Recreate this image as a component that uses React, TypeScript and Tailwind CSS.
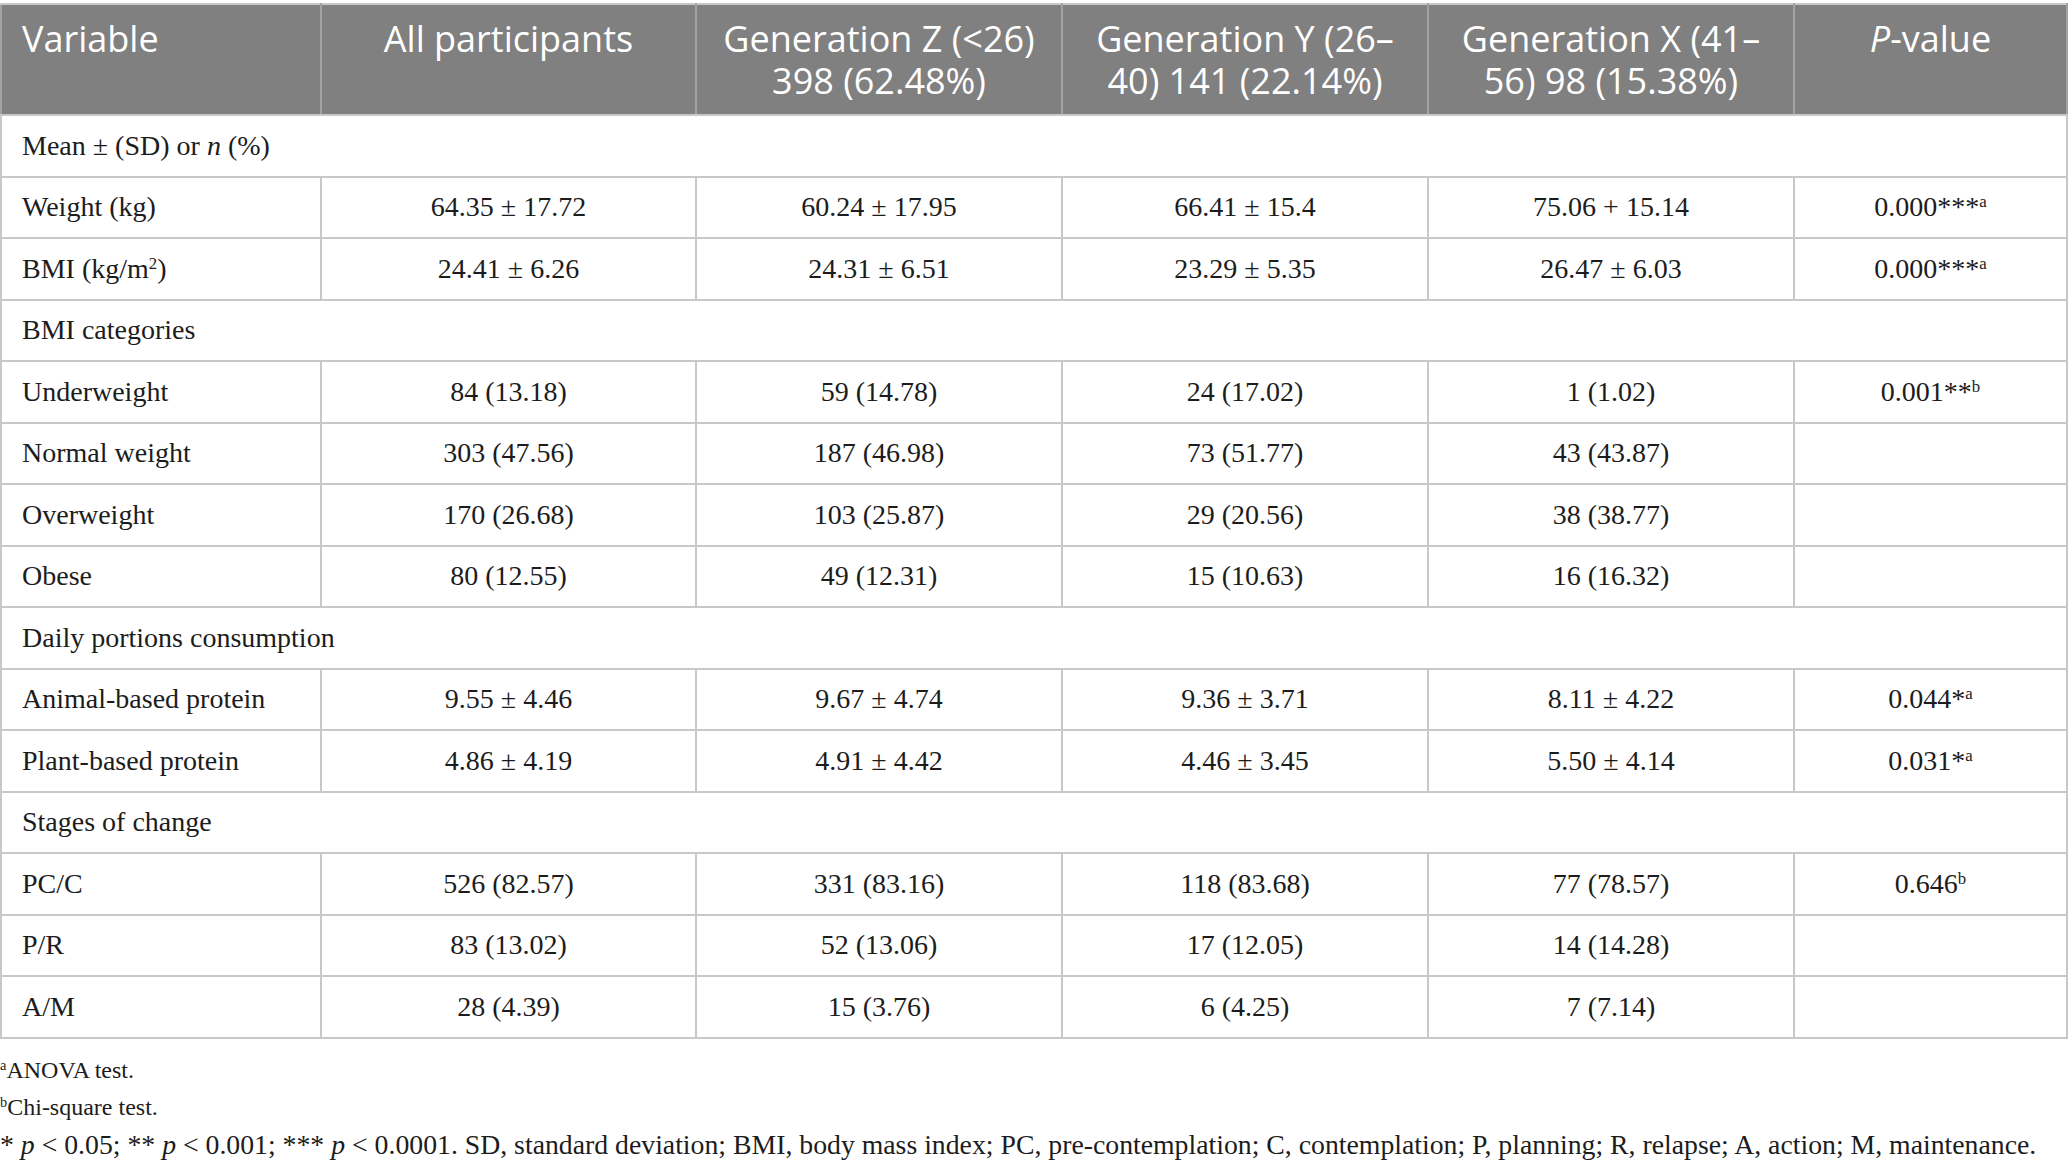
import type { ReactNode } from 'react'

type Row =
  | { kind: 'section'; label: ReactNode }
  | { kind: 'data'; label: ReactNode; cells: string[]; p?: ReactNode }

const Sup = ({ children }: { children: ReactNode }) => (
  <span className="relative -top-[0.55em] text-[0.6em] leading-none">
    {children}
  </span>
)

const pv = (value: string, stars: string, note: string) => (
  <>
    {value}
    {stars}
    <Sup>{note}</Sup>
  </>
)

const ROWS: Row[] = [
  {
    kind: 'section',
    label: (
      <>
        Mean ± (SD) or <i>n</i> (%)
      </>
    ),
  },
  {
    kind: 'data',
    label: 'Weight (kg)',
    cells: ['64.35 ± 17.72', '60.24 ± 17.95', '66.41 ± 15.4', '75.06 + 15.14'],
    p: pv('0.000', '***', 'a'),
  },
  {
    kind: 'data',
    label: (
      <>
        BMI (kg/m<Sup>2</Sup>)
      </>
    ),
    cells: ['24.41 ± 6.26', '24.31 ± 6.51', '23.29 ± 5.35', '26.47 ± 6.03'],
    p: pv('0.000', '***', 'a'),
  },
  { kind: 'section', label: 'BMI categories' },
  {
    kind: 'data',
    label: 'Underweight',
    cells: ['84 (13.18)', '59 (14.78)', '24 (17.02)', '1 (1.02)'],
    p: pv('0.001', '**', 'b'),
  },
  {
    kind: 'data',
    label: 'Normal weight',
    cells: ['303 (47.56)', '187 (46.98)', '73 (51.77)', '43 (43.87)'],
  },
  {
    kind: 'data',
    label: 'Overweight',
    cells: ['170 (26.68)', '103 (25.87)', '29 (20.56)', '38 (38.77)'],
  },
  {
    kind: 'data',
    label: 'Obese',
    cells: ['80 (12.55)', '49 (12.31)', '15 (10.63)', '16 (16.32)'],
  },
  { kind: 'section', label: 'Daily portions consumption' },
  {
    kind: 'data',
    label: 'Animal-based protein',
    cells: ['9.55 ± 4.46', '9.67 ± 4.74', '9.36 ± 3.71', '8.11 ± 4.22'],
    p: pv('0.044', '*', 'a'),
  },
  {
    kind: 'data',
    label: 'Plant-based protein',
    cells: ['4.86 ± 4.19', '4.91 ± 4.42', '4.46 ± 3.45', '5.50 ± 4.14'],
    p: pv('0.031', '*', 'a'),
  },
  { kind: 'section', label: 'Stages of change' },
  {
    kind: 'data',
    label: 'PC/C',
    cells: ['526 (82.57)', '331 (83.16)', '118 (83.68)', '77 (78.57)'],
    p: pv('0.646', '', 'b'),
  },
  {
    kind: 'data',
    label: 'P/R',
    cells: ['83 (13.02)', '52 (13.06)', '17 (12.05)', '14 (14.28)'],
  },
  {
    kind: 'data',
    label: 'A/M',
    cells: ['28 (4.39)', '15 (3.76)', '6 (4.25)', '7 (7.14)'],
  },
]

const th =
  'border-2 border-x-[#a3a3a3] border-t-[#c8c8c8] border-b-[#c8c8c8] px-5 pt-[13px] align-top font-normal'
const td = 'border-2 border-[#c8c8c8] px-5 text-center'

const App = () => {
  return (
    <div className="min-h-screen bg-white pt-[3px] text-[#1c1c1c]">
      <table className="w-full table-fixed border-collapse font-['Liberation_Serif',serif] text-[28px]">
        <colgroup>
          <col className="w-[320px]" />
          <col className="w-[375px]" />
          <col className="w-[366px]" />
          <col className="w-[366px]" />
          <col className="w-[366px]" />
          <col />
        </colgroup>
        <thead>
          <tr className="h-[111px] bg-[#7f807f] font-['Open_Sans',sans-serif] text-[36px] leading-[42px] text-white">
            <th className={`${th} text-left`}>Variable</th>
            <th className={`${th} text-center`}>All participants</th>
            <th className={`${th} text-center whitespace-nowrap`}>
              Generation Z (&lt;26)
              <br />
              398 (62.48%)
            </th>
            <th className={`${th} text-center whitespace-nowrap`}>
              Generation Y (26–
              <br />
              40) 141 (22.14%)
            </th>
            <th className={`${th} text-center whitespace-nowrap`}>
              Generation X (41–
              <br />
              56) 98 (15.38%)
            </th>
            <th className={`${th} text-center`}>
              <i>P</i>-value
            </th>
          </tr>
        </thead>
        <tbody>
          {ROWS.map((row, i) =>
            row.kind === 'section' ? (
              <tr key={i} className="h-[61.5px]">
                <td colSpan={6} className="border-2 border-[#c8c8c8] px-5 text-left">
                  {row.label}
                </td>
              </tr>
            ) : (
              <tr key={i} className="h-[61.5px]">
                <td className="border-2 border-[#c8c8c8] px-5 text-left">
                  {row.label}
                </td>
                {row.cells.map((cell, j) => (
                  <td key={j} className={td}>
                    {cell}
                  </td>
                ))}
                <td className={td}>{row.p}</td>
              </tr>
            ),
          )}
        </tbody>
      </table>

      <div className="mt-[13px] font-['Liberation_Serif',serif] text-[24px] leading-[37px]">
        <p>
          <Sup>a</Sup>ANOVA test.
        </p>
        <p>
          <Sup>b</Sup>Chi-square test.
        </p>
        <p className="text-[27.75px]">
          * <i>p</i> &lt; 0.05; ** <i>p</i> &lt; 0.001; *** <i>p</i> &lt;
          0.0001. SD, standard deviation; BMI, body mass index; PC,
          pre-contemplation; C, contemplation; P, planning; R, relapse; A,
          action; M, maintenance.
        </p>
      </div>
    </div>
  )
}

export default App
